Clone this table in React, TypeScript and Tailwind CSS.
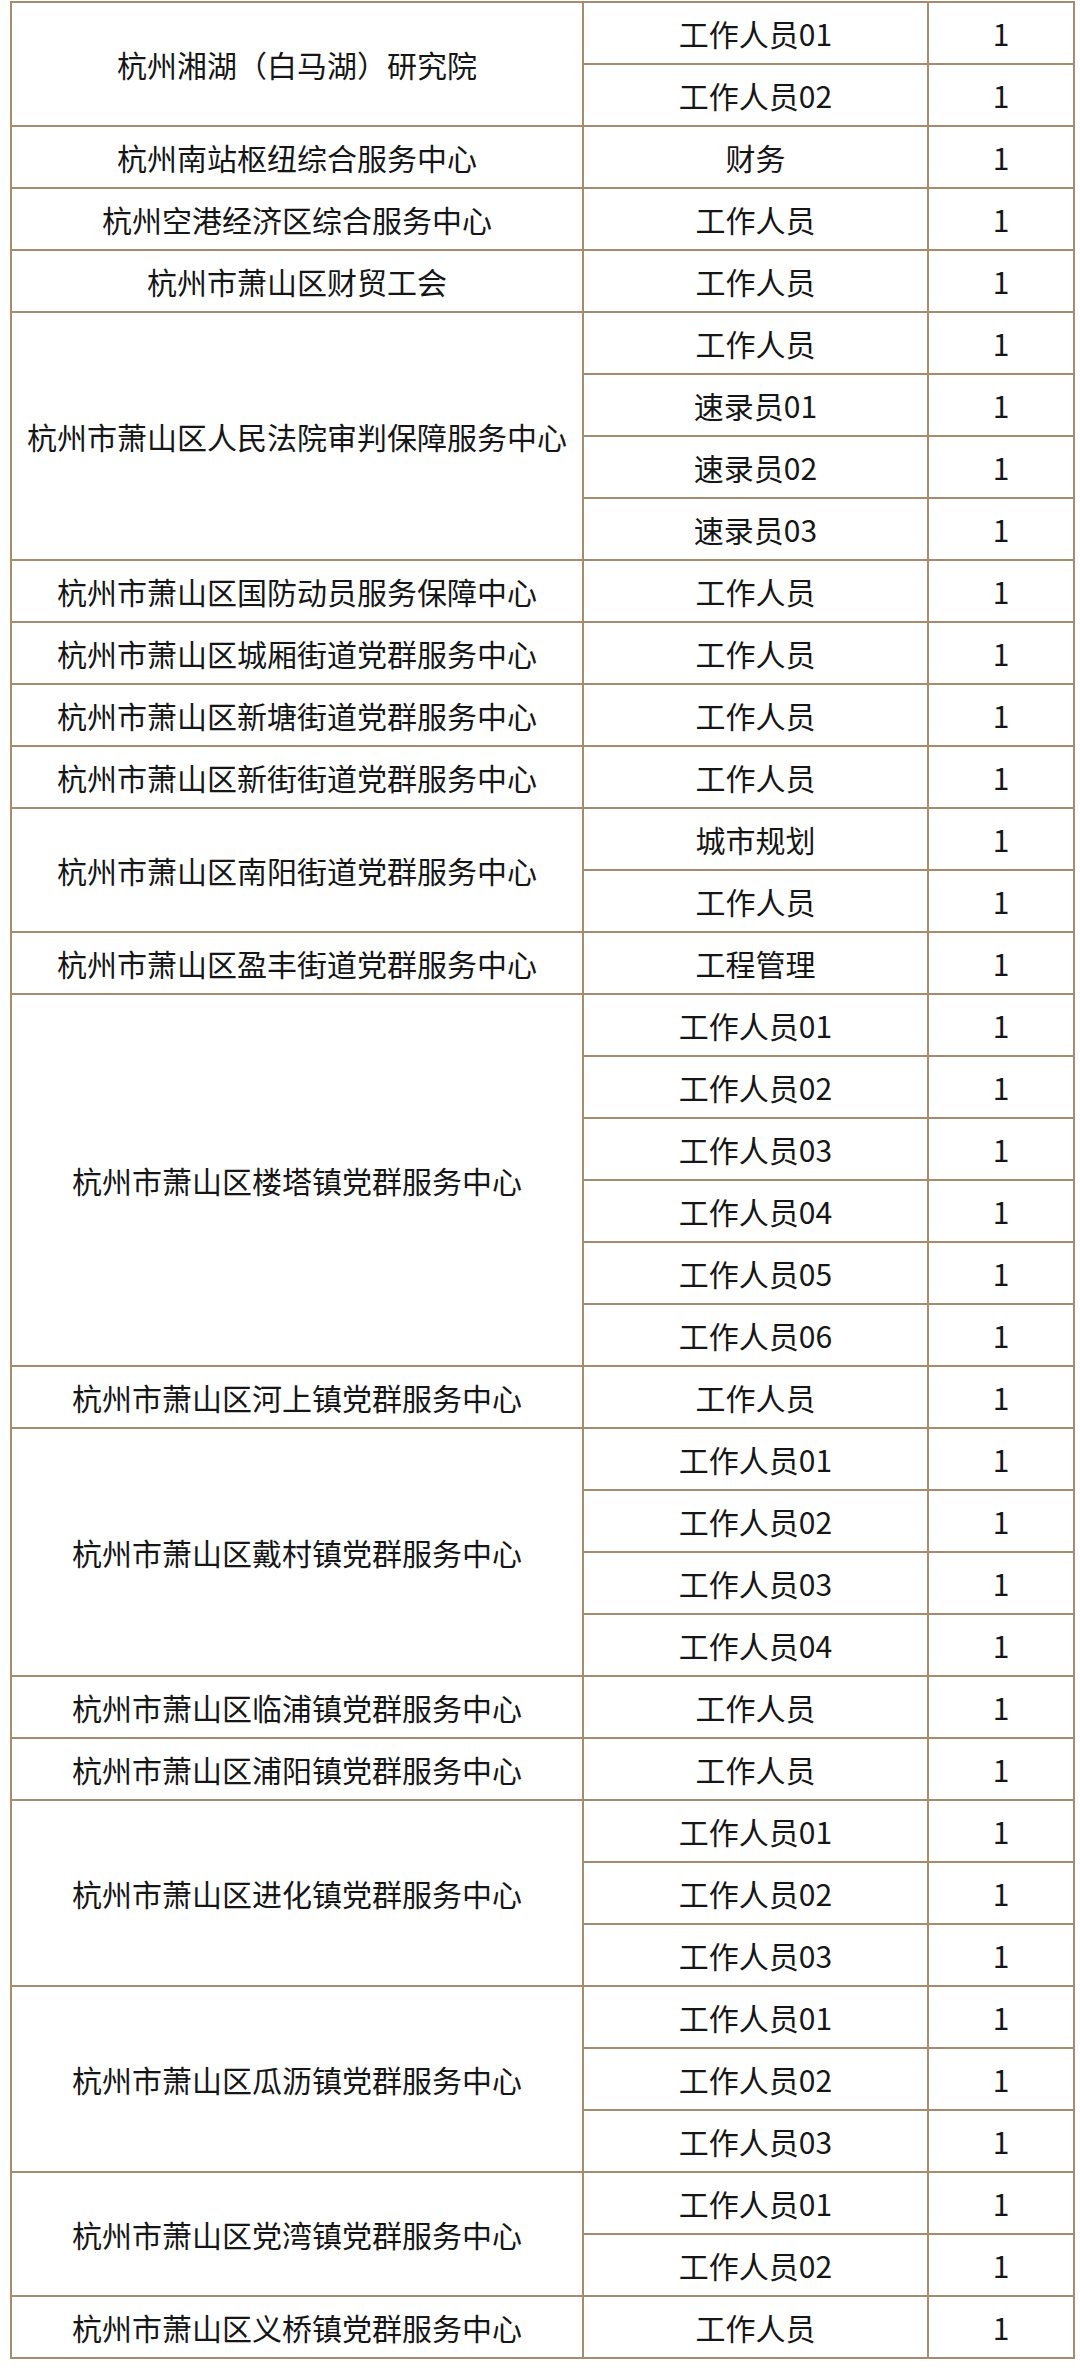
type Group = {
  unit: string;
  posts: string[];
};

const GROUPS: Group[] = [
  { unit: '杭州湘湖（白马湖）研究院', posts: ['工作人员01', '工作人员02'] },
  { unit: '杭州南站枢纽综合服务中心', posts: ['财务'] },
  { unit: '杭州空港经济区综合服务中心', posts: ['工作人员'] },
  { unit: '杭州市萧山区财贸工会', posts: ['工作人员'] },
  { unit: '杭州市萧山区人民法院审判保障服务中心', posts: ['工作人员', '速录员01', '速录员02', '速录员03'] },
  { unit: '杭州市萧山区国防动员服务保障中心', posts: ['工作人员'] },
  { unit: '杭州市萧山区城厢街道党群服务中心', posts: ['工作人员'] },
  { unit: '杭州市萧山区新塘街道党群服务中心', posts: ['工作人员'] },
  { unit: '杭州市萧山区新街街道党群服务中心', posts: ['工作人员'] },
  { unit: '杭州市萧山区南阳街道党群服务中心', posts: ['城市规划', '工作人员'] },
  { unit: '杭州市萧山区盈丰街道党群服务中心', posts: ['工程管理'] },
  {
    unit: '杭州市萧山区楼塔镇党群服务中心',
    posts: ['工作人员01', '工作人员02', '工作人员03', '工作人员04', '工作人员05', '工作人员06'],
  },
  { unit: '杭州市萧山区河上镇党群服务中心', posts: ['工作人员'] },
  { unit: '杭州市萧山区戴村镇党群服务中心', posts: ['工作人员01', '工作人员02', '工作人员03', '工作人员04'] },
  { unit: '杭州市萧山区临浦镇党群服务中心', posts: ['工作人员'] },
  { unit: '杭州市萧山区浦阳镇党群服务中心', posts: ['工作人员'] },
  { unit: '杭州市萧山区进化镇党群服务中心', posts: ['工作人员01', '工作人员02', '工作人员03'] },
  { unit: '杭州市萧山区瓜沥镇党群服务中心', posts: ['工作人员01', '工作人员02', '工作人员03'] },
  { unit: '杭州市萧山区党湾镇党群服务中心', posts: ['工作人员01', '工作人员02'] },
  { unit: '杭州市萧山区义桥镇党群服务中心', posts: ['工作人员'] },
];

const cell = 'border-2 border-[#a58c6e] text-center align-middle p-0 leading-none';

export default function App() {
  return (
    <div
      className="min-h-[2370px] w-[1080px] bg-white pl-[10px] pt-[1px] text-[30px] text-[#161616]"
      style={{ fontFamily: '"Noto Sans CJK SC", "Noto Sans", sans-serif' }}
    >
      <table className="w-[1063px] table-fixed border-collapse">
        <colgroup>
          <col className="w-[572px]" />
          <col className="w-[345px]" />
          <col className="w-[146px]" />
        </colgroup>
        <tbody>
          {GROUPS.map((g) =>
            g.posts.map((post, i) => (
              <tr key={g.unit + post} className="h-[62px]">
                {i === 0 ? (
                  <td rowSpan={g.posts.length} className={cell}>
                    {g.unit}
                  </td>
                ) : null}
                <td className={cell}>{post}</td>
                <td className={cell}>1</td>
              </tr>
            ))
          )}
        </tbody>
      </table>
    </div>
  );
}
